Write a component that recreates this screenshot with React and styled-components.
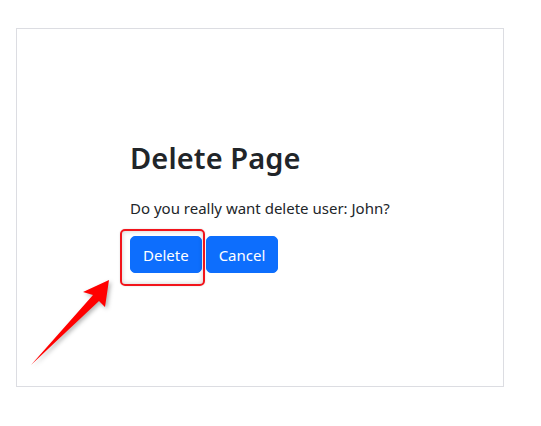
import React from 'react';
import styled, { createGlobalStyle } from 'styled-components';

const GlobalStyle = createGlobalStyle`
  body {
    margin: 0;
    background: #fff;
    font-family: "Noto Sans", "Open Sans", sans-serif;
    color: #212529;
  }
`;

const Page = styled.div`
  position: relative;
  width: 541px;
  height: 426px;
  padding: 28px 0 0 16px;
  box-sizing: border-box;
`;

const Frame = styled.div`
  width: 488px;
  height: 359px;
  box-sizing: border-box;
  border: 1px solid #dcdde2;
  padding: 112px 0 0 113px;
`;

const Title = styled.h3`
  margin: 0 0 21px;
  font-size: 29px;
  font-weight: 600;
  letter-spacing: 0.1px;
  line-height: 1.2;
  color: #212529;
`;

const Message = styled.p`
  margin: 0 0 17px;
  font-size: 15px;
  line-height: 1.5;
`;

const Actions = styled.div`
  display: flex;
  gap: 4px;
`;

const Highlight = styled.span`
  position: relative;
  display: inline-flex;
`;

const Ring = styled.span`
  position: absolute;
  left: -10px;
  top: -7px;
  right: -3px;
  bottom: -13px;
  border: 2px solid #f2141b;
  border-radius: 5px;
  box-shadow: inset 0 0 5px rgba(0, 0, 0, 0.2), 0 0 2px rgba(0, 0, 0, 0.15);
  pointer-events: none;
`;

const Button = styled.button`
  font-family: inherit;
  font-size: 15px;
  line-height: 24px;
  padding: 6px 12px;
  height: 37px;
  border: 1px solid #0d6efd;
  border-radius: 5px;
  background: #0d6efd;
  color: #fff;
  cursor: pointer;
`;

const Arrow = styled.svg`
  position: absolute;
  left: 0;
  top: 0;
  filter: drop-shadow(2px 2px 2px rgba(0, 0, 0, 0.3));
`;

export default function App() {
  return (
    <>
      <GlobalStyle />
      <Page>
        <Frame>
          <Title>Delete Page</Title>
          <Message>Do you really want delete user: John?</Message>
          <Actions>
            <Highlight>
              <Button>Delete</Button>
              <Ring />
            </Highlight>
            <Button>Cancel</Button>
          </Actions>
        </Frame>
        <Arrow width="541" height="426" viewBox="0 0 541 426">
          <path d="M31 365 L93 295 L83 292 L109 280 L105 307 L99 301 Z" fill="#ff0000" />
        </Arrow>
      </Page>
    </>
  );
}
